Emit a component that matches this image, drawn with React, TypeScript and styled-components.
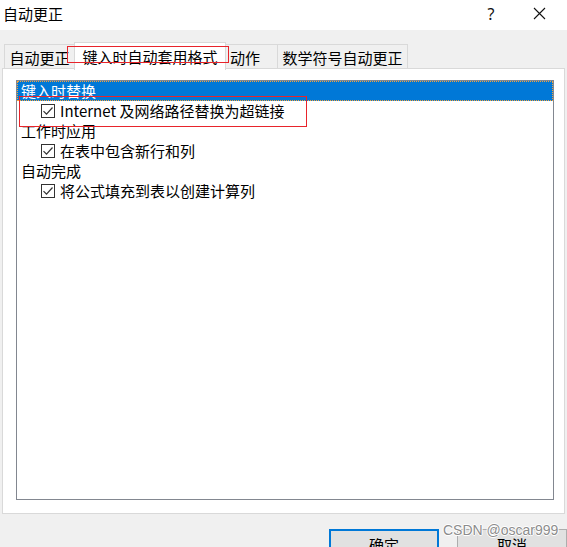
import React from "react";
import styled, { createGlobalStyle } from "styled-components";

const Global = createGlobalStyle`
  html, body { margin: 0; padding: 0; background: #f0f0f0; }
  body { font-family: "Noto Sans CJK SC", "Noto Sans", sans-serif; }
  * { box-sizing: border-box; }
`;

const Dialog = styled.div`
  position: relative;
  width: 567px;
  height: 547px;
  overflow: hidden;
  background: #f0f0f0;
  font-size: 15px;
  color: #000;
`;

const TitleBar = styled.div`
  height: 30px;
  background: #fff;
  display: flex;
  align-items: center;
  padding-left: 3px;
  padding-bottom: 3px;
`;

const Title = styled.div`
  flex: 1;
  font-size: 15px;
`;

const TitleBtn = styled.div<{ $w: number }>`
  width: ${(p) => p.$w}px;
  display: flex;
  justify-content: center;
  align-items: center;
  font-family: "Noto Sans", sans-serif;
  font-size: 16px;
  color: #111;
`;

const Tabs = styled.div`
  display: flex;
  align-items: flex-end;
  margin-top: 11px;
  padding-left: 4px;
  height: 28px;
  position: relative;
  z-index: 1;
`;

const Tab = styled.div<{ $w: number; $active?: boolean; $left?: boolean }>`
  width: ${(p) => p.$w}px;
  height: ${(p) => (p.$active ? 28 : 25)}px;
  margin-bottom: ${(p) => (p.$active ? -1 : 0)}px;
  background: ${(p) => (p.$active ? "#fff" : "#f0f0f0")};
  border: 1px solid #d9d9d9;
  border-bottom: ${(p) => (p.$active ? "none" : "1px solid #d9d9d9")};
  display: flex;
  align-items: center;
  justify-content: ${(p) => (p.$left ? "flex-start" : "center")};
  padding-left: ${(p) => (p.$left ? 4 : 0)}px;
  padding-top: ${(p) => (p.$active ? 0 : 2)}px;
  font-size: 15px;
  white-space: nowrap;
  & + & { margin-left: -1px; }
`;

const Panel = styled.div`
  margin: -1px 2px 0 2px;
  height: 446px;
  background: #fff;
  border: 1px solid #d9d9d9;
  padding: 11px 10px 13px 13px;
`;

const ListBox = styled.div`
  width: 538px;
  height: 420px;
  border: 1px solid #828790;
  display: flex;
  flex-direction: column;
`;

const Row = styled.div<{ $selected?: boolean; $indent?: boolean }>`
  height: 20px;
  display: flex;
  align-items: center;
  gap: 5px;
  padding-left: ${(p) => (p.$indent ? 24 : 4)}px;
  padding-bottom: 1px;
  background: ${(p) => (p.$selected ? "#0078d7" : "transparent")};
  color: ${(p) => (p.$selected ? "#fff" : "#000")};
  outline: ${(p) => (p.$selected ? "1px dotted #f7a33a" : "none")};
  outline-offset: -1px;
  font-size: 15px;
  white-space: nowrap;
`;

const Box = styled.span`
  width: 14px;
  height: 14px;
  margin-top: 1px;
  border: 1px solid #333;
  background: #fff;
  display: flex;
  align-items: center;
  justify-content: center;
  flex: none;
`;

const Footer = styled.div`
  display: flex;
  gap: 18px;
  padding-left: 329px;
  margin-top: 15px;
`;

const Button = styled.div<{ $primary?: boolean }>`
  width: 110px;
  height: 30px;
  flex: none;
  background: #e1e1e1;
  border: ${(p) => (p.$primary ? "2px solid #0078d7" : "1px solid #adadad")};
  display: flex;
  align-items: center;
  justify-content: center;
  font-size: 15px;
`;

const Mark = styled.div<{ $x: number; $y: number; $w: number; $h: number }>`
  position: absolute;
  left: ${(p) => p.$x}px;
  top: ${(p) => p.$y}px;
  width: ${(p) => p.$w}px;
  height: ${(p) => p.$h}px;
  border: 1.5px solid #e8242b;
  pointer-events: none;
  z-index: 5;
`;

const Watermark = styled.div`
  position: absolute;
  left: 443px;
  top: 520px;
  white-space: nowrap;
  font-family: "Liberation Sans", Arial, sans-serif;
  font-size: 14px;
  line-height: 20px;
  color: #8c8c8c;
  text-shadow: 1px 0 0 #fff, -1px 0 0 #fff, 0 1px 0 #fff, 0 -1px 0 #fff;
  z-index: 6;
`;

const Check = () => (
  <Box>
    <svg width="12" height="12" viewBox="0 0 12 12">
      <path d="M1.5 6.2 L4.5 9.2 L10.5 2.5" fill="none" stroke="#333" strokeWidth="1.2" />
    </svg>
  </Box>
);

export default function App() {
  return (
    <Dialog>
      <Global />
      <TitleBar>
        <Title>自动更正</Title>
        <TitleBtn $w={40}>?</TitleBtn>
        <TitleBtn $w={56}>
          <svg width="13" height="13" viewBox="0 0 13 13">
            <path d="M1 1 L12 12 M12 1 L1 12" stroke="#111" strokeWidth="1.1" />
          </svg>
        </TitleBtn>
      </TitleBar>
      <Tabs>
        <Tab $w={71}>自动更正</Tab>
        <Tab $w={152} $active>键入时自动套用格式</Tab>
        <Tab $w={53} $left>动作</Tab>
        <Tab $w={131}>数学符号自动更正</Tab>
      </Tabs>
      <Panel>
        <ListBox>
          <Row $selected>键入时替换</Row>
          <Row $indent>
            <Check />
            Internet 及网络路径替换为超链接
          </Row>
          <Row>工作时应用</Row>
          <Row $indent>
            <Check />
            在表中包含新行和列
          </Row>
          <Row>自动完成</Row>
          <Row $indent>
            <Check />
            将公式填充到表以创建计算列
          </Row>
        </ListBox>
      </Panel>
      <Footer>
        <Button $primary>确定</Button>
        <Button>取消</Button>
      </Footer>
      <Mark $x={67} $y={46} $w={162} $h={17} />
      <Mark $x={19} $y={96} $w={288} $h={31} />
      <Watermark>CSDN @oscar999</Watermark>
    </Dialog>
  );
}
